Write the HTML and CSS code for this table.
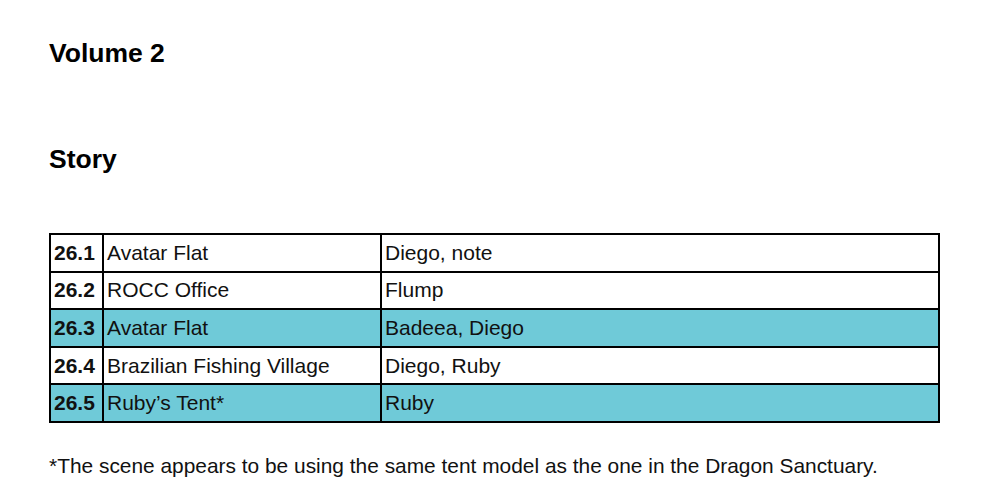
FILE: index.html
```html
<!DOCTYPE html>
<html>
<head>
<meta charset="utf-8">
<link rel="stylesheet" href="styles.css">
</head>
<body>
<div class="page">
  <h2 class="heading vol">Volume 2</h2>
  <h2 class="heading story">Story</h2>
  <table class="scenes">
    <colgroup><col class="c1"><col class="c2"><col class="c3"></colgroup>
    <tr><td class="num">26.1</td><td>Avatar Flat</td><td>Diego, note</td></tr>
    <tr><td class="num">26.2</td><td>ROCC Office</td><td>Flump</td></tr>
    <tr class="hl"><td class="num">26.3</td><td>Avatar Flat</td><td>Badeea, Diego</td></tr>
    <tr><td class="num">26.4</td><td>Brazilian Fishing Village</td><td>Diego, Ruby</td></tr>
    <tr class="hl"><td class="num">26.5</td><td>Ruby’s Tent*</td><td>Ruby</td></tr>
  </table>
  <p class="note">*The scene appears to be using the same tent model as the one in the Dragon Sanctuary.</p>
</div>
</body>
</html>
```
FILE: styles.css
```css
html, body { margin: 0; padding: 0; background: #fff; }
body { font-family: "Liberation Sans", Arial, sans-serif; color: #111; }
.page { padding: 38px 0 0 49px; }
.heading { margin: 0; font-size: 26.5px; font-weight: bold; line-height: 30px; color: #000; }
.story { margin-top: 76px; }
.scenes { margin-top: 59px; border-collapse: collapse; width: 889px; table-layout: fixed; font-size: 21px; }
.c1 { width: 53px; }
.c2 { width: 278px; }
.c3 { width: 558px; }
.scenes td { border: 2px solid #000; height: 35.6px; padding: 0 3px; vertical-align: middle; line-height: 24px; }
.num { font-weight: bold; }
.hl td { background: #6fcad8; }
.note { margin: 31px 0 0; font-size: 20.9px; line-height: 24px; }
```
